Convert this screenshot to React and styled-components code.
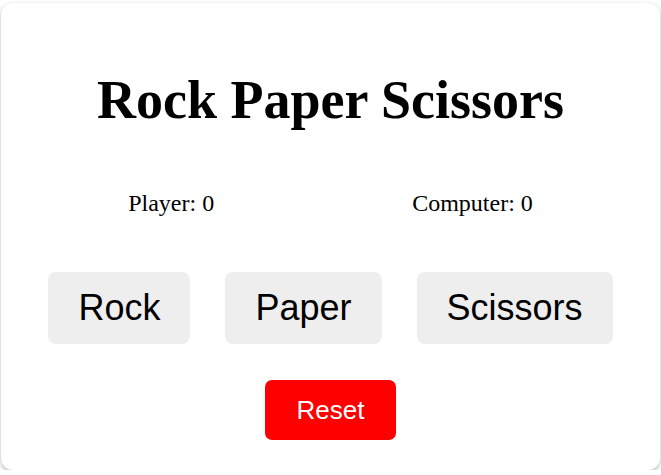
import React, { useState } from 'react'
import styled, { createGlobalStyle } from 'styled-components'

const GlobalStyle = createGlobalStyle`
  body {
    margin: 0;
    background: #fff;
    font-family: "Liberation Serif", "Times New Roman", serif;
  }
`

const Card = styled.div`
  margin: 3px 1px 0;
  height: 467px;
  box-sizing: border-box;
  padding-top: 67px;
  background: #fff;
  border-radius: 12px;
  box-shadow: 0 2px 5px rgba(0, 0, 0, 0.28);
  display: flex;
  flex-direction: column;
  align-items: center;
`

const Title = styled.h1`
  margin: 0;
  font-size: 54px;
  font-weight: bold;
  line-height: 60px;
`

const Scores = styled.div`
  margin-top: 60px;
  display: flex;
  justify-content: center;
  gap: 198px;
  font-size: 24px;
  line-height: 26px;
`

const Choices = styled.div`
  margin-top: 56px;
  display: flex;
  justify-content: center;
  gap: 35px;
`

const ChoiceButton = styled.button`
  border: none;
  border-radius: 8px;
  background: #eeeeee;
  color: #000;
  font-family: "Liberation Sans", Arial, sans-serif;
  font-size: 36px;
  line-height: 42px;
  padding: 15px 30px;
  cursor: pointer;
`

const ResetButton = styled.button`
  margin-top: 36px;
  border: none;
  border-radius: 7px;
  background: #ff0000;
  color: #fff;
  font-family: "Liberation Sans", Arial, sans-serif;
  font-size: 26px;
  line-height: 30px;
  padding: 15px 31.5px;
  cursor: pointer;
`

const choices = ['Rock', 'Paper', 'Scissors']

function App() {
  const [player, setPlayer] = useState(0)
  const [computer, setComputer] = useState(0)

  const play = (choice) => {
    const pick = choices[Math.floor(Math.random() * 3)]
    if (pick === choice) return
    const wins =
      (choice === 'Rock' && pick === 'Scissors') ||
      (choice === 'Paper' && pick === 'Rock') ||
      (choice === 'Scissors' && pick === 'Paper')
    if (wins) setPlayer(player + 1)
    else setComputer(computer + 1)
  }

  return (
    <>
      <GlobalStyle />
      <Card>
        <Title>Rock Paper Scissors</Title>
        <Scores>
          <span>Player: {player}</span>
          <span>Computer: {computer}</span>
        </Scores>
        <Choices>
          {choices.map((c) => (
            <ChoiceButton key={c} onClick={() => play(c)}>{c}</ChoiceButton>
          ))}
        </Choices>
        <ResetButton onClick={() => { setPlayer(0); setComputer(0) }}>Reset</ResetButton>
      </Card>
    </>
  )
}

export default App
